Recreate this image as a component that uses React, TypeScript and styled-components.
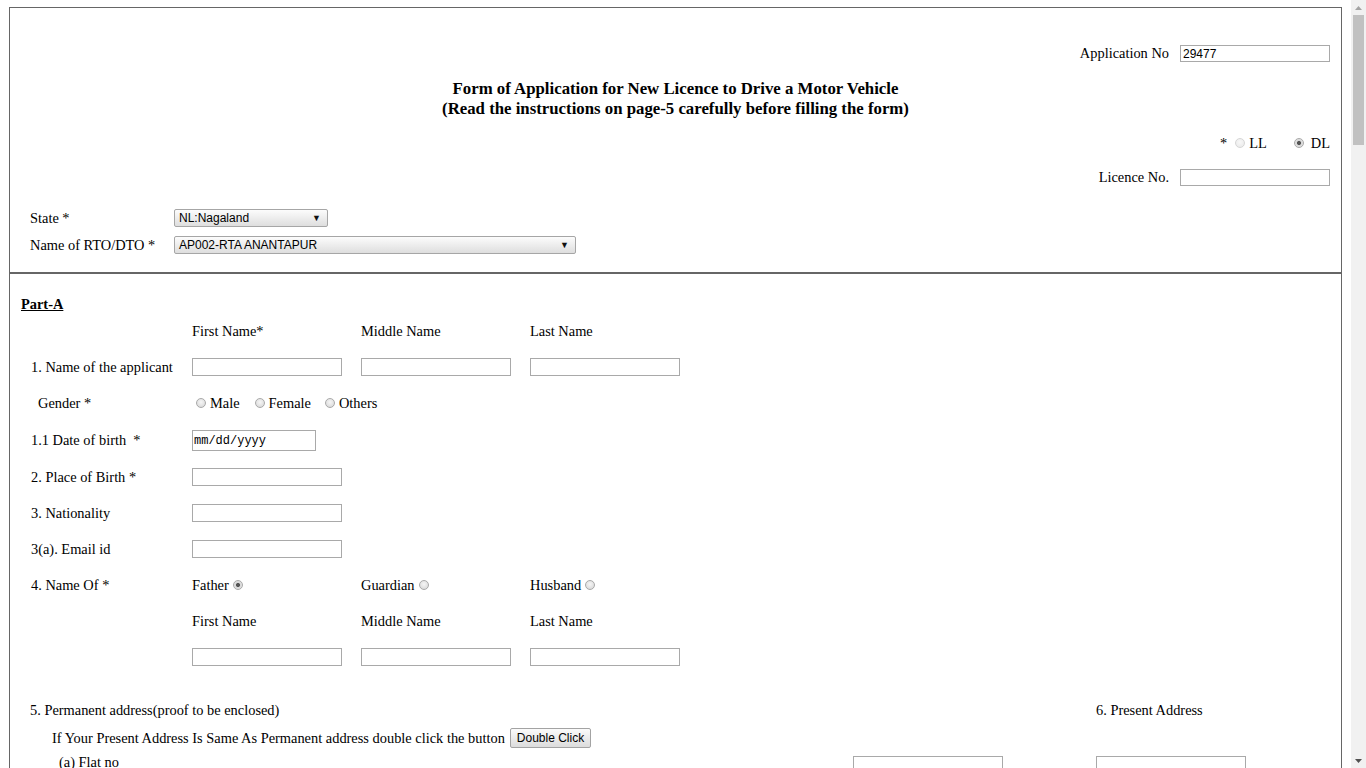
import React from 'react';
import styled, { createGlobalStyle } from 'styled-components';

const Global = createGlobalStyle`
  html, body { margin: 0; padding: 0; background: #fff; }
  body {
    font-family: "Liberation Serif", "Times New Roman", serif;
    font-size: 14.4px;
    color: #000;
  }
`;

const Frame = styled.div`
  margin: 7px 24px 10px 9px;
  border: 1px solid #666;
`;

const Header = styled.div`
  padding: 37px 11px 18px 11px;
  border-bottom: 2px solid #666;
  display: flex;
  flex-direction: column;
`;

const RightRow = styled.div<{ $mt: number; $h: number }>`
  display: flex;
  justify-content: flex-end;
  align-items: center;
  gap: 11px;
  margin-top: ${(p) => p.$mt}px;
  height: ${(p) => p.$h}px;
`;

const Title = styled.h1`
  margin: 17px 0 0;
  text-align: center;
  font-size: 16.8px;
  line-height: 20px;
  font-weight: bold;
`;

const ChoiceGroup = styled.div`
  display: flex;
  align-items: center;
  line-height: 16px;
`;

const Star = styled.span`
  margin-right: 8px;
`;

const Choice = styled.label<{ $gap?: number }>`
  display: inline-flex;
  align-items: center;
  gap: 4px;
  margin-left: ${(p) => p.$gap ?? 0}px;
`;

const Radio = styled.span<{ $checked?: boolean; $faint?: boolean }>`
  display: inline-block;
  width: 10px;
  height: 10px;
  box-sizing: border-box;
  border-radius: 50%;
  border: 1px solid ${(p) => (p.$faint ? '#d6d6d6' : '#a9a9a9')};
  background: ${(p) =>
    p.$checked
      ? 'radial-gradient(circle, #555 0 1.6px, #d8d8d8 2.4px, #ececec 100%)'
      : p.$faint
      ? 'radial-gradient(circle at 50% 40%, #f8f8f8, #e8e8e8)'
      : 'radial-gradient(circle at 50% 40%, #f6f6f6, #d4d4d4)'};
`;

const TextInput = styled.input<{ $w?: number; $h?: number }>`
  width: ${(p) => p.$w ?? 150}px;
  height: ${(p) => p.$h ?? 18}px;
  box-sizing: border-box;
  border: 1px solid #a9a9a9;
  padding: 0 2px;
  margin: 0;
  font: 12px "Liberation Sans", Arial, sans-serif;
  color: #000;
  background: #fff;
  outline: none;
`;

const DateInput = styled.input`
  width: 124px;
  height: 21px;
  box-sizing: border-box;
  border: 1px solid #a9a9a9;
  padding: 2px 1px 0;
  margin: 0;
  font: 12px "Liberation Mono", "DejaVu Sans Mono", monospace;
  color: #000;
  background: #fff;
  outline: none;
`;

const Select = styled.div<{ $w: number }>`
  width: ${(p) => p.$w}px;
  height: 18px;
  box-sizing: border-box;
  border: 1px solid #a6a6a6;
  border-radius: 2px;
  background: linear-gradient(#fcfcfc, #dedede);
  font: 12px "Liberation Sans", Arial, sans-serif;
  display: flex;
  align-items: center;
  justify-content: space-between;
  padding: 0 6px 0 4px;
`;

const Arrow = styled.span`
  font-size: 9px;
  color: #111;
`;

const LeftRow = styled.div<{ $mt: number }>`
  display: flex;
  align-items: center;
  margin-top: ${(p) => p.$mt}px;
  padding-left: 9px;
  height: 18px;
`;

const LeftLabel = styled.span`
  width: 144px;
`;

const Section = styled.div`
  padding: 0 11px;
`;

const PartHeading = styled.h2`
  margin: 21px 0 0;
  font-size: 14.4px;
  line-height: 18px;
  font-weight: bold;
  text-decoration: underline;
`;

const Row = styled.div<{ $h?: number }>`
  display: flex;
  align-items: center;
  height: ${(p) => p.$h ?? 36}px;
  padding-left: 10px;
`;

const Label = styled.span<{ $indent?: number }>`
  width: ${(p) => 161 - (p.$indent ?? 0)}px;
  padding-left: ${(p) => p.$indent ?? 0}px;
  flex-shrink: 0;
`;

const Fields = styled.div`
  display: flex;
  align-items: center;
  gap: 19px;
`;

const Cell = styled.span`
  width: 150px;
  display: inline-flex;
  align-items: center;
  gap: 4px;
`;

const GenderGroup = styled.div`
  display: flex;
  align-items: center;
  padding-left: 4px;
`;

const AddrGrid = styled.div<{ $mt?: number }>`
  display: grid;
  grid-template-columns: 739px 150px 150px;
  column-gap: 93px;
  align-items: center;
  margin-top: ${(p) => p.$mt ?? 0}px;
`;

const AddrHead = styled.span<{ $pl: number; $col?: string }>`
  padding-left: ${(p) => p.$pl}px;
  grid-column: ${(p) => p.$col ?? 'auto'};
  line-height: 36px;
  white-space: nowrap;
`;

const SameLine = styled.div`
  grid-column: 1 / -1;
  padding-left: 31px;
  display: flex;
  align-items: center;
  height: 20px;
`;

const Button = styled.button`
  margin-left: 5px;
  height: 20px;
  padding: 0 6px;
  border: 1px solid #a3a3a3;
  border-radius: 2px;
  background: linear-gradient(#fbfbfb, #dcdcdc);
  font: 12px "Liberation Sans", Arial, sans-serif;
  color: #000;
`;

const AddrLabel = styled.span`
  padding-left: 38px;
  align-self: start;
  line-height: 17px;
`;

const AddrInputSlot = styled.span`
  align-self: start;
  padding-top: 2px;
  display: flex;
`;

const AddrRow = styled(AddrGrid)`
  height: 36px;
  align-items: start;
`;

const ScrollTrack = styled.div`
  position: fixed;
  top: 0;
  right: 0;
  width: 15px;
  height: 100vh;
  background: #f1f1f1;
  display: flex;
  flex-direction: column;
  align-items: center;
`;

const ScrollArrow = styled.div`
  width: 15px;
  height: 15px;
  display: flex;
  align-items: center;
  justify-content: center;
`;

const ScrollThumb = styled.div`
  width: 11px;
  height: 130px;
  background: #c1c1c1;
`;

const ScrollSpacer = styled.div`
  flex: 1;
`;

const addrItems = [
  '(a) Flat no',
  '(b) House Name',
  '(c) House no',
  '(d) Street',
  '(e) Village/Town/City',
  '(f) District',
  '(g) State',
  '(h) Pin',
];

const extraRows = [
  '7. Educational Qualification',
  '8. Identification mark(s)',
  '9. Blood Group',
];

export default function App() {
  return (
    <>
      <Global />
      <Frame>
        <Header>
          <RightRow $mt={0} $h={17}>
            <span>Application No</span>
            <TextInput $h={17} defaultValue="29477" />
          </RightRow>
          <Title>
            Form of Application for New Licence to Drive a Motor Vehicle
            <br />
            (Read the instructions on page-5 carefully before filling the form)
          </Title>
          <RightRow $mt={16} $h={16}>
            <ChoiceGroup>
              <Star>*</Star>
              <Choice>
                <Radio $faint />
                LL
              </Choice>
              <Choice $gap={27}>
                <Radio $checked />
                <span style={{ marginLeft: 3 }}>DL</span>
              </Choice>
            </ChoiceGroup>
          </RightRow>
          <RightRow $mt={18} $h={17}>
            <span>Licence No.</span>
            <TextInput $h={17} />
          </RightRow>
          <LeftRow $mt={23}>
            <LeftLabel>State *</LeftLabel>
            <Select $w={154}>
              <span>NL:Nagaland</span>
              <Arrow>▼</Arrow>
            </Select>
          </LeftRow>
          <LeftRow $mt={9}>
            <LeftLabel>Name of RTO/DTO *</LeftLabel>
            <Select $w={402}>
              <span>AP002-RTA ANANTAPUR</span>
              <Arrow>▼</Arrow>
            </Select>
          </LeftRow>
        </Header>

        <Section>
          <PartHeading>Part-A</PartHeading>
          <Row>
            <Label />
            <Fields>
              <Cell>First Name*</Cell>
              <Cell>Middle Name</Cell>
              <Cell>Last Name</Cell>
            </Fields>
          </Row>
          <Row>
            <Label>1. Name of the applicant</Label>
            <Fields>
              <TextInput />
              <TextInput />
              <TextInput />
            </Fields>
          </Row>
          <Row>
            <Label $indent={7}>Gender *</Label>
            <GenderGroup>
              <Choice>
                <Radio />
                Male
              </Choice>
              <Choice $gap={15}>
                <Radio />
                Female
              </Choice>
              <Choice $gap={14}>
                <Radio />
                Others
              </Choice>
            </GenderGroup>
          </Row>
          <Row $h={38}>
            <Label>1.1 Date of birth&nbsp; *</Label>
            <DateInput defaultValue="mm/dd/yyyy" />
          </Row>
          <Row>
            <Label>2. Place of Birth *</Label>
            <TextInput />
          </Row>
          <Row>
            <Label>3. Nationality</Label>
            <TextInput />
          </Row>
          <Row>
            <Label>3(a). Email id</Label>
            <TextInput />
          </Row>
          <Row>
            <Label>4. Name Of *</Label>
            <Fields>
              <Cell>
                Father <Radio $checked />
              </Cell>
              <Cell>
                Guardian <Radio />
              </Cell>
              <Cell>
                Husband <Radio />
              </Cell>
            </Fields>
          </Row>
          <Row>
            <Label />
            <Fields>
              <Cell>First Name</Cell>
              <Cell>Middle Name</Cell>
              <Cell>Last Name</Cell>
            </Fields>
          </Row>
          <Row>
            <Label />
            <Fields>
              <TextInput />
              <TextInput />
              <TextInput />
            </Fields>
          </Row>

          <AddrGrid $mt={17}>
            <AddrHead $pl={9}>5. Permanent address(proof to be enclosed)</AddrHead>
            <AddrHead $pl={0} $col="3">
              6. Present Address
            </AddrHead>
            <SameLine>
              If Your Present Address Is Same As Permanent address double click the button
              <Button type="button">Double Click</Button>
            </SameLine>
          </AddrGrid>
          {addrItems.map((item, i) => (
            <AddrRow key={item} $mt={i === 0 ? 6 : 0}>
              <AddrLabel>{item}</AddrLabel>
              <AddrInputSlot>
                <TextInput />
              </AddrInputSlot>
              <AddrInputSlot>
                <TextInput />
              </AddrInputSlot>
            </AddrRow>
          ))}
          {extraRows.map((item) => (
            <Row key={item}>
              <Label>{item}</Label>
              <TextInput />
            </Row>
          ))}
        </Section>
      </Frame>
      <ScrollTrack aria-hidden="true">
        <ScrollArrow>
          <svg width="7" height="4" viewBox="0 0 7 4">
            <path d="M0 4 L3.5 0 L7 4 Z" fill="#a3a3a3" />
          </svg>
        </ScrollArrow>
        <ScrollThumb />
        <ScrollSpacer />
        <ScrollArrow>
          <svg width="7" height="4" viewBox="0 0 7 4">
            <path d="M0 0 L3.5 4 L7 0 Z" fill="#505050" />
          </svg>
        </ScrollArrow>
      </ScrollTrack>
    </>
  );
}
